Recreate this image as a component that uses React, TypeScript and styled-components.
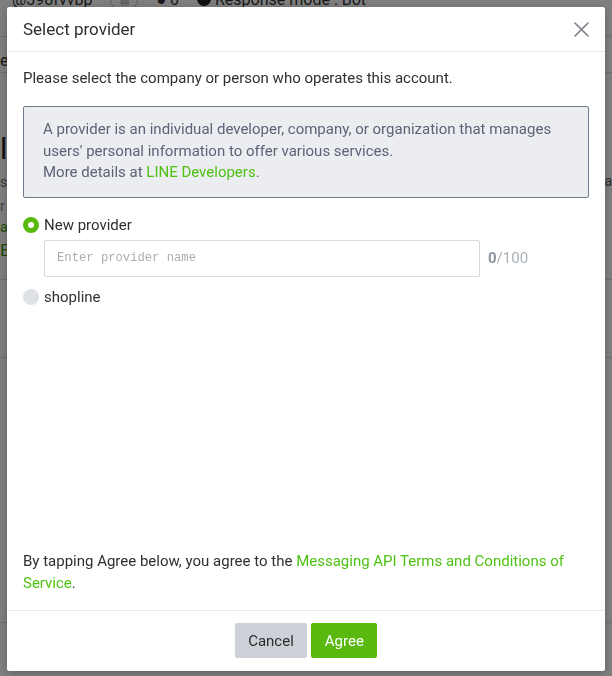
import React from "react";
import styled, { createGlobalStyle } from "styled-components";

const GlobalStyle = createGlobalStyle`
  html, body { margin: 0; padding: 0; }
  body {
    font-family: Roboto, "Liberation Sans", Arial, sans-serif;
    background: #ffffff;
    overflow: hidden;
  }
  * { box-sizing: border-box; }
`;

const GREEN = "#5ab90f";
const LINK = "#4fc114";

/* ---------- page behind the dialog ---------- */

const Page = styled.div`
  width: 612px;
  height: 676px;
  background: #fff;
  color: #222;
  overflow: hidden;
  display: flex;
  flex-direction: column;
`;

const TopBar = styled.div`
  height: 47px;
  flex: none;
  margin-top: -10px;
  padding: 0 12px;
  display: flex;
  align-items: flex-start;
  gap: 18px;
  font-size: 16px;
  color: #333;
  border-bottom: 1px solid #ddd;
`;

const Pill = styled.span`
  display: inline-flex;
  align-items: center;
  justify-content: center;
  width: 28px;
  height: 20px;
  border: 1px solid #bbb;
  border-radius: 10px;
  color: #999;
  font-size: 10px;
`;

const Dot = styled.span`
  display: inline-block;
  width: 14px;
  height: 14px;
  border-radius: 50%;
  background: #222;
  margin-right: 4px;
  vertical-align: -1px;
`;

const Section = styled.div<{ $h: number; $pad?: number }>`
  height: ${(p) => p.$h}px;
  flex: none;
  border-bottom: 1px solid #ddd;
  display: flex;
  justify-content: space-between;
  padding-top: ${(p) => p.$pad ?? 12}px;
`;

const SideText = styled.div<{ $size?: number; $color?: string; $gap?: number }>`
  font-size: ${(p) => p.$size ?? 14}px;
  color: ${(p) => p.$color ?? "#666"};
  line-height: ${(p) => (p.$size && p.$size > 20 ? 1.3 : 1.5)};
  margin-top: ${(p) => p.$gap ?? 0}px;
`;

const Overlay = styled.div`
  position: fixed;
  inset: 0;
  background: rgba(0, 0, 0, 0.5);
`;

/* ---------- dialog ---------- */

const Dialog = styled.div`
  position: fixed;
  left: 7px;
  top: 7px;
  width: 598px;
  height: 664px;
  background: #fff;
  border-radius: 2px;
  box-shadow: 0 2px 8px rgba(0, 0, 0, 0.25);
  display: flex;
  flex-direction: column;
  color: #2f3033;
`;

const Header = styled.div`
  height: 45px;
  flex: none;
  padding: 0 16px;
  display: flex;
  align-items: center;
  justify-content: space-between;
  border-bottom: 1px solid #e9eaec;
`;

const Title = styled.h2`
  margin: 0;
  font-size: 17px;
  font-weight: 400;
  color: #2e2f31;
`;

const CloseButton = styled.button`
  border: 0;
  background: none;
  padding: 0;
  width: 16px;
  height: 16px;
  display: flex;
  align-items: center;
  justify-content: center;
  cursor: pointer;
`;

const Body = styled.div`
  flex: 1;
  padding: 15px 16px 16px;
  display: flex;
  flex-direction: column;
`;

const Lead = styled.p`
  margin: 0;
  font-size: 15px;
  line-height: 22px;
  color: #2f3033;
`;

const InfoBox = styled.div`
  margin-top: 17px;
  padding: 12px 19px 13px;
  background: #ebedf0;
  border: 1px solid #6f7a92;
  border-radius: 2px;
  font-size: 15px;
  line-height: 21.5px;
  color: #5c6377;
`;

const Link = styled.a`
  color: ${LINK};
  text-decoration: none;
`;

const Options = styled.div`
  margin-top: 16px;
  display: flex;
  flex-direction: column;
`;

const RadioRow = styled.label`
  display: flex;
  align-items: center;
  gap: 5px;
  height: 22px;
  font-size: 15px;
  color: #2f3033;
`;

const RadioMark = styled.span<{ $checked?: boolean }>`
  width: 16px;
  height: 16px;
  border-radius: 50%;
  flex: none;
  background: ${(p) => (p.$checked ? "#fff" : "#dee1e6")};
  border: ${(p) => (p.$checked ? `5px solid ${GREEN}` : "none")};
`;

const InputRow = styled.div`
  margin: 4px 0 9px 21px;
  display: flex;
  align-items: center;
  gap: 8px;
`;

const TextInput = styled.input`
  width: 436px;
  height: 37px;
  border: 1px solid #d6d9de;
  border-radius: 2px;
  padding: 0 12px;
  font-family: "Liberation Mono", "DejaVu Sans Mono", monospace;
  font-size: 12.2px;
  color: #333;
  outline: none;
  &::placeholder {
    color: #a9adb3;
  }
`;

const Counter = styled.span`
  font-size: 15px;
  color: #aab0b7;
  b {
    color: #8d949d;
    font-weight: 700;
  }
`;

const Spacer = styled.div`
  flex: 1;
`;

const Terms = styled.p`
  margin: 0;
  font-size: 15px;
  line-height: 22px;
  color: #2f3033;
`;

const Footer = styled.div`
  height: 61px;
  flex: none;
  border-top: 1px solid #e9eaec;
  display: flex;
  align-items: center;
  justify-content: center;
  gap: 4px;
  padding-bottom: 1px;
`;

const Button = styled.button<{ $primary?: boolean }>`
  height: 35px;
  padding: 0 13.5px;
  border: 0;
  border-radius: 2px;
  font-family: Roboto, "Liberation Sans", Arial, sans-serif;
  font-size: 15px;
  background: ${(p) => (p.$primary ? GREEN : "#cdd1d7")};
  color: ${(p) => (p.$primary ? "#fff" : "#2b2c2e")};
  cursor: pointer;
`;

const CloseIcon = () => (
  <svg width="15" height="15" viewBox="0 0 15 15" fill="none">
    <path d="M1 1L14 14M14 1L1 14" stroke="#7b7e83" strokeWidth="1.6" strokeLinecap="round" />
  </svg>
);

export default function App() {
  return (
    <>
      <GlobalStyle />
      <Page>
        <TopBar>
          <span>@398fvvbp</span>
          <Pill>▤</Pill>
          <span>● 0</span>
          <span>
            <Dot />
            Response mode : Bot
          </span>
        </TopBar>
        <Section $h={36} $pad={12}>
          <SideText $size={16} $color="#333">e</SideText>
          <SideText />
        </Section>
        <Section $h={207} $pad={56}>
          <div>
            <SideText $size={30} $color="#222">lo</SideText>
            <SideText $color="#777" $gap={4}>s</SideText>
            <SideText $color="#888" $gap={3}>r</SideText>
            <SideText $color="#3a9a0a">a</SideText>
            <SideText $size={17} $color="#3a9a0a">E</SideText>
          </div>
          <div>
            <SideText $size={30}>&nbsp;</SideText>
            <SideText $color="#555" $gap={3}>ra</SideText>
          </div>
        </Section>
        <Section $h={78} />
        <Section $h={265} />
      </Page>
      <Overlay />
      <Dialog role="dialog" aria-modal="true">
        <Header>
          <Title>Select provider</Title>
          <CloseButton aria-label="Close">
            <CloseIcon />
          </CloseButton>
        </Header>
        <Body>
          <Lead>Please select the company or person who operates this account.</Lead>
          <InfoBox>
            A provider is an individual developer, company, or organization that manages
            users' personal information to offer various services.
            <br />
            More details at <Link href="#">LINE Developers</Link>.
          </InfoBox>
          <Options>
            <RadioRow>
              <RadioMark $checked />
              New provider
            </RadioRow>
            <InputRow>
              <TextInput placeholder="Enter provider name" />
              <Counter>
                <b>0</b>/100
              </Counter>
            </InputRow>
            <RadioRow>
              <RadioMark />
              shopline
            </RadioRow>
          </Options>
          <Spacer />
          <Terms>
            By tapping Agree below, you agree to the{" "}
            <Link href="#">Messaging API Terms and Conditions of Service</Link>.
          </Terms>
        </Body>
        <Footer>
          <Button>Cancel</Button>
          <Button $primary>Agree</Button>
        </Footer>
      </Dialog>
    </>
  );
}
